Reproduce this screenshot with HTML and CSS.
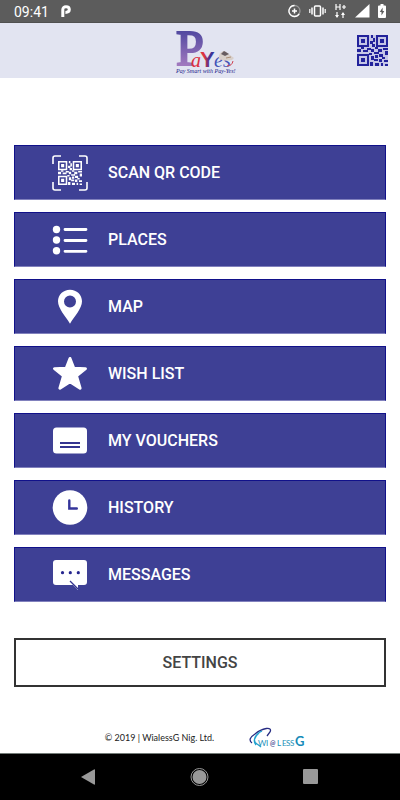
FILE: index.html
```html
<!DOCTYPE html>
<html lang="en">
<head>
<meta charset="utf-8">
<meta name="viewport" content="width=device-width, initial-scale=1">
<title>PaYes</title>
<link rel="stylesheet" href="styles.css">
</head>
<body>
<svg class="defs" width="0" height="0" aria-hidden="true">
  <defs>
    <symbol id="qr" viewBox="0 0 31 31">
      <path fill-rule="evenodd" d="M0 0h12v12H0zM2 2v8h8V2zM4 4h4v4H4zM19 0h12v12H19zM21 2v8h8V2zM23 4h4v4h-4zM0 19h12v12H0zM2 21v8h8v-8zM4 23h4v4H4z"/>
      <path d="M14 0h2v3h-2zM16 3h2v4h-2zM13 6h3v3h-3zM15 9h3v3h-3zM0 14h4v3H0zM4 12h3v2H4zM6 15h5v2H6zM10 13h4v2h-4zM14 14h3v3h-3zM18 12h3v2h-3zM17 17h5v2h-5zM21 14h4v3h-4zM26 13h5v2h-5zM28 16h3v4h-3zM12 18h3v2h-3zM14 21h3v4h-3zM18 20h3v3h-3zM22 19h4v3h-4zM17 24h4v2h-4zM13 27h3v4h-3zM18 28h4v3h-4zM22 24h3v3h-3zM25 22h3v2h-3zM27 25h4v2h-4zM24 28h2v3h-2zM28 29h3v2h-3z"/>
    </symbol>
  </defs>
</svg>
<div class="screen">
  <div class="status">
    <span class="clock">09:41</span>
    <svg class="parking" width="10" height="12" viewBox="0 0 10 12"><path d="M1.800 12V4.800C1.800 2.800 3 1.700 5 1.700s3.300 1.200 3.300 2.800S7 7.400 4.400 7.400" fill="none" stroke="#fff" stroke-width="3"/></svg>
    <div class="indicators">
      <svg width="13" height="14" viewBox="0 0 13 14" fill="none"><circle cx="6.500" cy="7" r="5.500" stroke="#999" stroke-width="1.300"/><path d="M6.500 1.500a5.500 5.500 0 1 0 4.700 8.300" stroke="#fff" stroke-width="1.300"/><path d="M4 7h5M6.500 4.500v5" stroke="#fff" stroke-width="1.500"/></svg>
      <svg width="17" height="14" viewBox="0 0 17 14" fill="none" stroke="#fff"><rect x="5.500" y="2" width="6" height="10" rx="1" stroke-width="1.500"/><path d="M3 3.500v7M14 3.500v7" stroke-width="1.500"/><path d="M.8 5v4M16.200 5v4" stroke-width="1.200"/></svg>
      <svg width="13" height="16" viewBox="0 0 13 16" fill="none" stroke="#fff" stroke-width="1.200"><path d="M2 1v6M6 1v6M2 4h4M8 4h4M10 2v4M3 9v5M9 15v-5"/><path d="M1 12l2 3 2-3zM7 12l2-3 2 3z" fill="#fff" stroke="none"/></svg>
      <svg width="15" height="14" viewBox="0 0 15 14"><path d="M0 13.500L14.500 0v13.500z" fill="#fff"/></svg>
      <svg width="8" height="14" viewBox="0 0 8 14"><path d="M2.500 0h3v1.500h1.500q1 0 1 1V13q0 1-1 1H1q-1 0-1-1V2.500q0-1 1-1h1.500z" fill="#fff"/><path d="M4.600 3.500L1.800 8h1.700v3.500L6.300 7H4.600z" fill="#5c5c5c"/></svg>
    </div>
  </div>
  <header class="header">
    <svg class="logo" width="62" height="48" viewBox="0 0 62 48" role="img" aria-label="PaYes, Pay Smart with Pay-Yes!">
      <defs>
        <linearGradient id="pg" x2="0" y2="1"><stop offset=".2" stop-color="#5149a0"/><stop offset=".8" stop-color="#a078be"/></linearGradient>
        <linearGradient id="yg"><stop offset=".3" stop-color="#dc3442"/><stop offset=".6" stop-color="#503090"/><stop offset="1" stop-color="#2837a0"/></linearGradient>
      </defs>
      <text class="logo-p" x="1" y="38" fill="url(#pg)" stroke="url(#pg)">P</text>
      <text class="logo-script" x="16" y="40" fill="#dc3040">a</text>
      <text class="logo-y" x="25" y="40" fill="url(#yg)">Y</text>
      <text class="logo-script" x="39" y="40" fill="#4353b8">e</text>
      <text class="logo-script" x="48" y="40" fill="#4353b8">s</text>
      <path d="M44 29q1-5 6-5l5 4 4 3-2 2q-7 2-13-1z" fill="#d8cfca"/><path d="M46 27l3-3 5 3-4 2z" fill="#665b60"/><path d="M51 31l5-1" stroke="#ad8f77"/><path d="M52 39q5 0 6-5" fill="none" stroke="#d04050"/>
      <text class="logo-tag" x="1" y="46">Pay Smart with Pay-Yes!</text>
    </svg>
    <button class="qr-button" aria-label="Show QR code"><svg width="31" height="31" fill="#22229b"><rect width="31" height="31" fill="#c4c5e6"/><use href="#qr"/></svg></button>
  </header>
  <main class="main">
    <nav class="menu">
      <button class="item">
        <svg width="36" height="36" viewBox="0 0 36 36" fill="#fff"><path d="M1 9V3q0-2 2-2h6M27 1h6q2 0 2 2v6M35 27v6q0 2-2 2h-6M9 35H3q-2 0-2-2v-6" fill="none" stroke="#fff" stroke-width="1.600"/><use href="#qr" x="6" y="6" width="24" height="24"/></svg>
        <span>SCAN QR CODE</span>
      </button>
      <button class="item">
        <svg width="36" height="36" viewBox="0 0 36 36" fill="#fff"><circle cx="4.500" cy="7.500" r="3.700"/><circle cx="4.500" cy="18" r="3.700"/><circle cx="4.500" cy="28.700" r="3.700"/><path d="M13 7.500h21M13 18.500h21M13 29.300h21" stroke="#fff" stroke-width="2.800" stroke-linecap="round"/></svg>
        <span>PLACES</span>
      </button>
      <button class="item">
        <svg width="36" height="36" viewBox="0 0 36 36" fill="#fff"><path fill-rule="evenodd" d="M18 .7C11.200.7 6 5.700 6 12.300c0 7.500 7.500 14.700 12 22.500 4.500-7.800 12-15 12-22.500C30 5.700 24.800.7 18 .7zM18 6.500a6 6 0 1 1 0 12 6 6 0 0 1 0-12z"/></svg>
        <span>MAP</span>
      </button>
      <button class="item">
        <svg width="36" height="36" viewBox="0 0 36 36" fill="#fff" stroke="#fff" stroke-width="3" stroke-linejoin="round"><path d="M18 2.500l3.800 9.700 11.700.5-9 7.200 3.600 12.300L18 25.800 7.900 32.200l3.600-12.300-9-7.200 11.700-.5z"/></svg>
        <span>WISH LIST</span>
      </button>
      <button class="item">
        <svg width="36" height="36" viewBox="0 0 36 36"><rect x="1" y="4.500" width="34" height="26" rx="3.500" fill="#fff"/><path d="M8 20h20M8 24h20" stroke="#34348f" stroke-width="1.800"/></svg>
        <span>MY VOUCHERS</span>
      </button>
      <button class="item">
        <svg width="36" height="36" viewBox="0 0 36 36"><circle cx="18" cy="17.500" r="17.300" fill="#fff"/><path d="M17.300 10.500v8h7.500" fill="none" stroke="#34349a" stroke-width="2.400" stroke-linecap="round"/></svg>
        <span>HISTORY</span>
      </button>
      <button class="item">
        <svg width="36" height="36" viewBox="0 0 36 36"><path d="M4 3h28q3 0 3 3v19q0 3-3 3h-6v5l-5-5H4q-3 0-3-3V6q0-3 3-3z" fill="#fff"/><path d="M18 24l8 8" stroke="#34348f" stroke-width="1.200"/><g fill="#26268f"><circle cx="10.500" cy="15.700" r="1.600"/><circle cx="18.300" cy="15.700" r="1.600"/><circle cx="26.300" cy="15.700" r="1.600"/></g></svg>
        <span>MESSAGES</span>
      </button>
    </nav>
    <button class="settings">SETTINGS</button>
  </main>
  <footer class="footer">
    <span>© 2019 | WialessG Nig. Ltd.</span>
    <svg width="56" height="22" viewBox="0 0 56 22" role="img" aria-label="WialessG" fill="none">
      <path d="M3 16Q-2 12 6 7C13 1 24-1 21 5l-3 4" stroke="#272c83" stroke-width="1.300"/>
      <path d="M13 4C6 7 3 14 8 17q3 2 4 3M10 6c-5 4-6 9-3 12" stroke="#22a2cf" stroke-width="1.300"/>
      <text class="brand" x="9" y="19">W</text><text class="brand" x="17" y="19">I</text>
      <text class="brand-at" x="21" y="19">@</text>
      <text class="brand" x="28" y="19">L</text><text class="brand" x="33" y="19">E</text><text class="brand" x="37" y="19">S</text><text class="brand" x="41" y="19">S</text>
      <text class="brand-g" x="46" y="19">G</text>
    </svg>
  </footer>
  <nav class="system">
    <button aria-label="Back"><svg width="20" height="20" viewBox="0 0 20 20"><path d="M3 10L16 2.500q1-.5 1 .5v14q0 1-1 .5z" fill="#999"/></svg></button>
    <button aria-label="Home"><svg width="20" height="20" viewBox="0 0 20 20"><circle cx="10.500" cy="10" r="8.500" fill="none" stroke="#999"/><circle cx="10.500" cy="10" r="7" fill="#999"/></svg></button>
    <button aria-label="Recent apps"><svg width="20" height="20" viewBox="0 0 20 20"><rect x="3" y="2" width="15" height="15" rx="1" fill="#999"/></svg></button>
  </nav>
</div>
</body>
</html>
```
FILE: styles.css
```css
* { box-sizing: border-box; }
body { margin: 0; background: #fff; font-family: Roboto, "Liberation Sans", sans-serif; }
button { font: inherit; margin: 0; padding: 0; border: 0; background: none; cursor: pointer; }
svg { display: block; flex: none; }
.defs { position: absolute; }
.screen { display: flex; flex-direction: column; min-height: 100vh; }

.status { display: flex; align-items: center; height: 23px; padding: 0 14px; background: #5c5c5c; border-bottom: 1px solid #505050; color: #fff; }
.clock { padding-top: 2px; font-size: 14px; font-weight: 400; line-height: 20px; }
.parking { margin-left: 12px; }
.indicators { display: flex; align-items: center; gap: 8px; margin-left: auto; }

.header { display: grid; grid-template-columns: 1fr auto 1fr; align-items: center; height: 55px; padding: 0 12px; background: #e2e4f1; }
.logo { grid-column: 2; margin-left: 12px; overflow: visible; }
.logo-p { font: 400 50px "Liberation Serif", serif; stroke-width: 2px; }
.logo-script { font: italic 400 20px "Liberation Serif", serif; }
.logo-y { font: 700 22px "Liberation Sans", sans-serif; }
.logo-tag { font: italic 400 6px "Liberation Serif", serif; fill: #20218a; }
.qr-button { justify-self: end; }

.main { padding: 67px 14px 0; }
.menu { display: grid; gap: 12px; }
.item { display: flex; align-items: center; gap: 20px; height: 55px; padding: 0 37px; background: #3e4095; border: 1px solid #11118a; border-bottom-color: #8181bd; color: #fff; font-size: 16px; font-weight: 500; line-height: 20px; text-align: left; }
.settings { width: 100%; height: 49px; margin-top: 36px; border: 2px solid #333; color: #444; font-size: 16px; font-weight: 500; line-height: 20px; }

.footer { display: flex; align-items: center; justify-content: center; gap: 35px; margin-top: auto; padding: 0 0 4px 10px; color: #222; font-family: Lato, "Open Sans", sans-serif; font-size: 9px; line-height: 22px; }
.brand { font: 8px Lato, sans-serif; fill: #1b91b9; }
.brand-at { font: italic 700 7px Lato, sans-serif; fill: #54559a; }
.brand-g { font: 700 13px Lato, sans-serif; fill: #168bb9; }
.system { display: flex; align-items: center; justify-content: space-between; height: 47px; padding: 0 80px 0 78px; background: #000; border-top: 1px solid #737b77; }
```
